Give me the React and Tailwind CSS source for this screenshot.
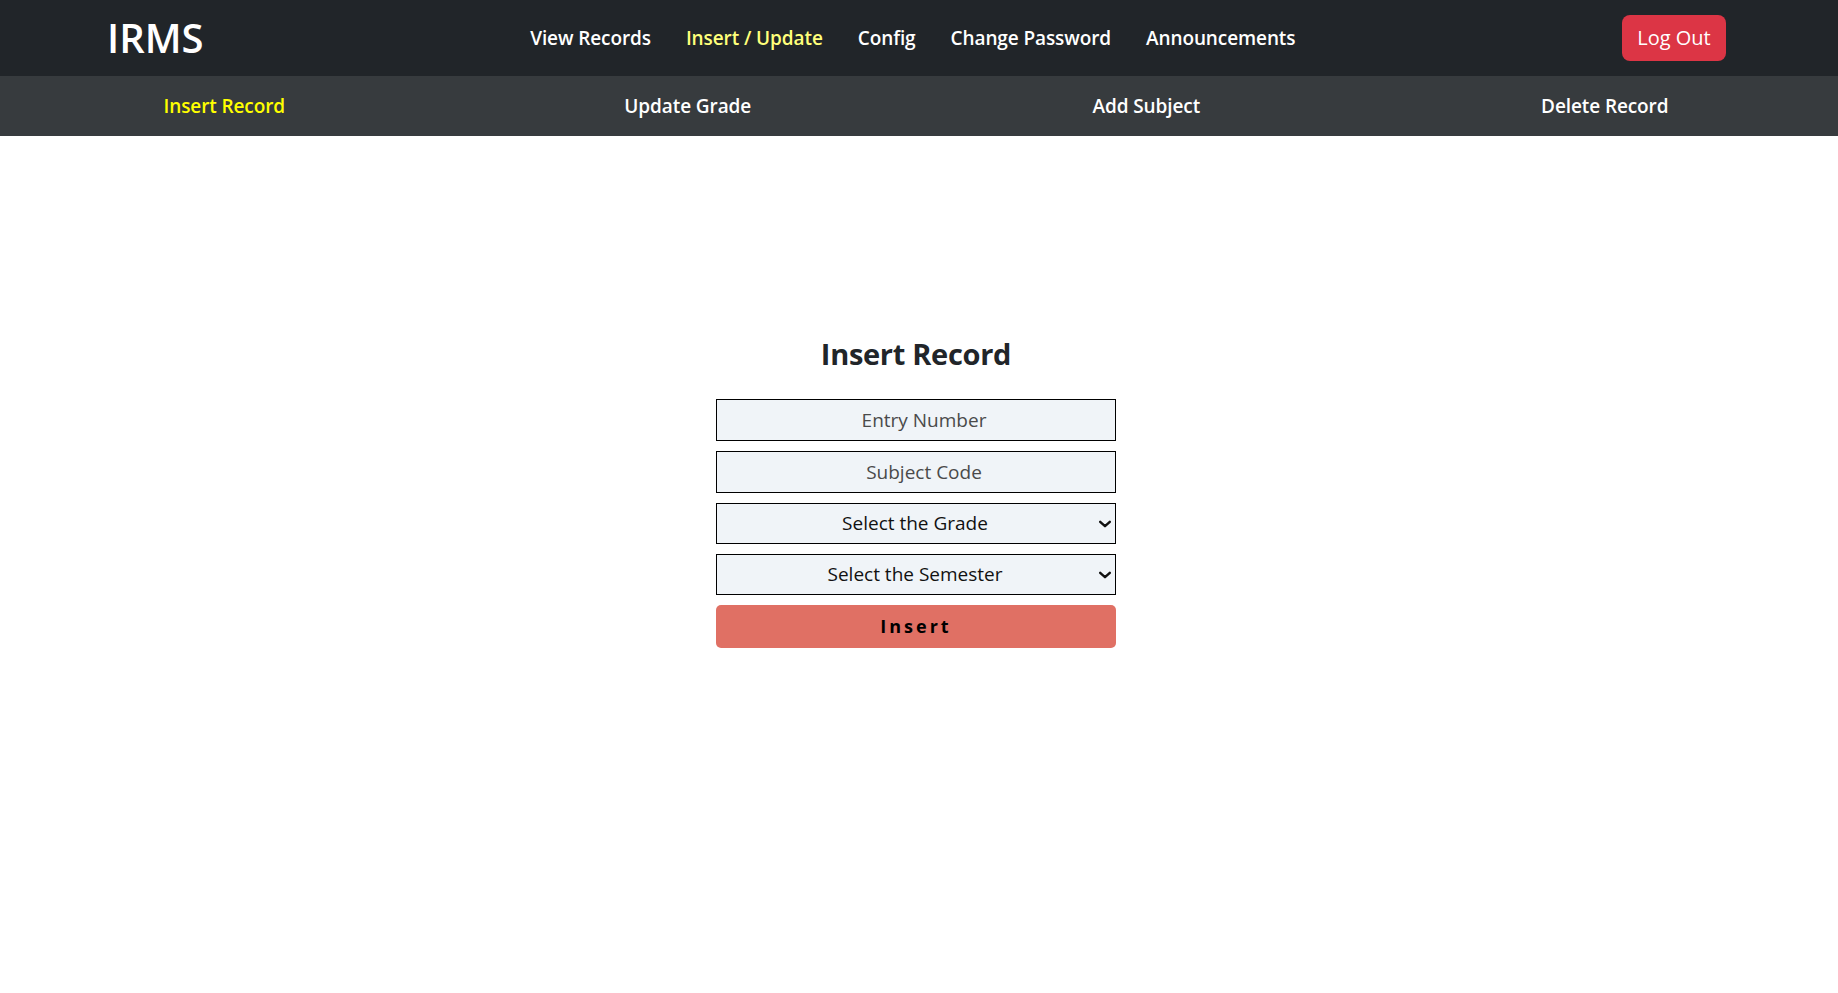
import React, { useState } from 'react';

const navLinks = ['View Records', 'Insert / Update', 'Config', 'Change Password', 'Announcements'];
const subLinks = ['Insert Record', 'Update Grade', 'Add Subject', 'Delete Record'];

const Chevron = () => (
  <svg
    className="pointer-events-none absolute right-[4px] top-1/2 -translate-y-1/2"
    width="14"
    height="14"
    viewBox="0 0 16 16"
    fill="none"
    stroke="#111"
    strokeWidth="2.8"
    strokeLinecap="round"
    strokeLinejoin="round"
  >
    <path d="M2.5 5.5l5.5 5 5.5-5" />
  </svg>
);

const App = () => {
  const [active] = useState('Insert / Update');
  const [activeSub] = useState('Insert Record');

  return (
    <div className="min-h-screen bg-white font-['Open_Sans',sans-serif] text-[#212529]">
      {/* top navbar */}
      <nav className="flex h-[76px] items-center bg-[#212529] pl-[107px] pr-[112px]">
        <span className="text-[40px] font-semibold leading-none text-white">IRMS</span>
        <ul className="flex flex-1 justify-center gap-[35px]">
          {navLinks.map((link) => (
            <li
              key={link}
              className={`text-[19px] font-semibold tracking-[-0.1px] ${
                link === active ? 'text-[#ffff7a]' : 'text-white'
              }`}
            >
              {link}
            </li>
          ))}
        </ul>
        <button className="h-[46px] w-[104px] rounded-[8px] bg-[#dc3545] text-[20px] text-white">
          Log Out
        </button>
      </nav>

      {/* sub navbar */}
      <div className="grid h-[60px] grid-cols-4 items-center bg-[#373b3e] pr-[4px]">
        {subLinks.map((link, i) => (
          <span
            key={link}
            className={`text-center text-[19px] font-semibold tracking-[-0.1px] ${
              i === 0 ? 'pr-[10px]' : ''
            } ${link === activeSub ? 'text-[#ffff00]' : 'text-white'}`}
          >
            {link}
          </span>
        ))}
      </div>

      {/* form */}
      <main className="flex flex-col items-center pr-[6px] pt-[200px]">
        <h2 className="mb-[27px] text-[29px] font-bold leading-[36px] tracking-[-0.3px] text-[#212529]">
          Insert Record
        </h2>
        <form className="flex w-[400px] flex-col gap-[10px]" onSubmit={(e) => e.preventDefault()}>
          <input
            type="text"
            placeholder="Entry Number"
            className="h-[42px] w-full border border-black bg-[#f0f4f8] pl-[16px] text-center text-[19px] outline-none placeholder:text-[#4a4a4a]"
          />
          <input
            type="text"
            placeholder="Subject Code"
            className="h-[42px] w-full border border-black bg-[#f0f4f8] pl-[16px] text-center text-[19px] outline-none placeholder:text-[#4a4a4a]"
          />
          <div className="relative">
            <select className="h-[41px] w-full appearance-none border border-black bg-[#f0f4f8] pr-[2px] text-center text-[19px] text-[#111] outline-none">
              <option>Select the Grade</option>
            </select>
            <Chevron />
          </div>
          <div className="relative">
            <select className="h-[41px] w-full appearance-none border border-black bg-[#f0f4f8] pr-[2px] text-center text-[19px] text-[#111] outline-none">
              <option>Select the Semester</option>
            </select>
            <Chevron />
          </div>
          <button
            type="submit"
            className="h-[43px] w-full rounded-[5px] bg-[#e07064] text-[18px] font-bold tracking-[3px] text-black"
          >
            Insert
          </button>
        </form>
      </main>
    </div>
  );
};

export default App;
